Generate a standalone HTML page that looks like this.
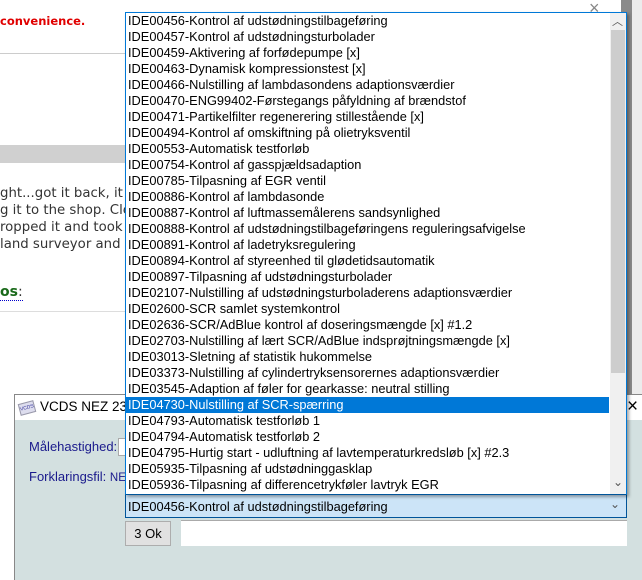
<!DOCTYPE html>
<html><head><meta charset="utf-8"><style>
body{margin:0;width:642px;height:579px;position:relative;overflow:hidden;background:#fff;font-family:"Liberation Sans",sans-serif}
.a{position:absolute}
.web{font-family:"DejaVu Sans",sans-serif;font-size:12.5px;color:#333}
.list{left:125px;top:12px;width:500px;height:481px;border:1px solid #0078d7;border-bottom-color:#005499;background:#fff;box-shadow:2px 2px 3px rgba(0,0,0,.35)}
.it{height:16px;line-height:16px;font-size:12.8px;color:#000;padding-left:2px;white-space:nowrap;width:481px}
.sel{background:#0078d7;color:#fff}
</style></head><body>
<div class="a" style="left:621px;top:0;width:11px;height:395px;background:#8a8a8a"></div>
<div class="a" style="left:632px;top:0;width:10px;height:395px;background:#ececec"></div>
<div class="a web" style="left:0;top:14px;color:#e00000;font-weight:bold;font-size:11.5px">convenience.</div>
<div class="a" style="left:0;top:53px;width:600px;height:1px;background:#ccc"></div>
<div class="a" style="left:589px;top:-2px;font-size:18px;color:#888">×</div>
<div class="a" style="left:0;top:145px;width:600px;height:18px;background:#d0d0d0"></div>
<div class="a web" style="left:0;top:185px;line-height:17px;font-size:13.3px">ght...got it back, it t<br>g it to the shop. Cle<br>ropped it and took r<br>land surveyor and v</div>
<div class="a web" style="left:0;top:284px;color:#1a6a1a;font-weight:bold;font-size:14px;border-bottom:1px dotted #00c">os<span style="color:#333;font-weight:normal">:</span></div>
<div class="a" style="left:0;top:311px;width:600px;height:1px;background:#ddd"></div>

<div class="a" style="left:14px;top:394px;width:628px;height:185px;background:#d3e0e0;border-left:1px solid #888;border-top:1px solid #888"></div>
<div class="a" style="left:15px;top:395px;width:627px;height:25px;background:#fff"></div>
<div class="a" style="left:19px;top:402px;width:14px;height:10px;background:#dde;border:1px solid #99a;transform:rotate(-15deg);font-size:5px;line-height:10px;color:#339;text-align:center">VCDS</div>
<div class="a" style="left:40px;top:399px;font-size:13.5px">VCDS NEZ 23.3.1</div>
<div class="a" style="left:627px;top:396px;font-size:19px;color:#000">×</div>
<div class="a" style="left:29px;top:439px;font-size:13px;color:#1a1a8c">Målehastighed:</div>
<div class="a" style="left:118px;top:438px;width:10px;height:16px;border:1px solid #aaa;background:#fff"></div>
<div class="a" style="left:29px;top:469px;font-size:13px;color:#1a1a8c">Forklaringsfil: <span style="font-size:11.5px">NE</span></div>

<div class="a" style="left:125px;top:494px;width:500px;height:22px;background:#cce4f7;border:1px solid #005499"></div>
<div class="a" style="left:128px;top:499px;font-size:12.8px">IDE00456-Kontrol af udstødningstilbageføring</div>
<div class="a" style="left:610px;top:497px;font-size:12px;color:#555">⌄</div>
<div class="a" style="left:125px;top:521px;width:44px;height:23px;background:#e1e1e1;border:1px solid #adadad;font-size:13px;line-height:23px;text-align:center">3 Ok</div>
<div class="a" style="left:181px;top:520px;width:446px;height:25px;background:#fff;border-top:1px solid #aaa"></div>

<div class="a list">
<div class="a" style="left:484px;top:0;width:16px;height:481px;background:#f0f0f0"></div>
<div class="a" style="left:485px;top:17px;width:14px;height:343px;background:#cdcdcd"></div>
<div class="a" style="left:486px;top:0;font-size:11px;color:#555">︿</div>
<div class="a" style="left:487px;top:462px;font-size:12px;color:#555">⌄</div>
<div class="a" style="top:0;left:0">
<div class="it">IDE00456-Kontrol af udstødningstilbageføring</div>
<div class="it">IDE00457-Kontrol af udstødningsturbolader</div>
<div class="it">IDE00459-Aktivering af forfødepumpe [x]</div>
<div class="it">IDE00463-Dynamisk kompressionstest [x]</div>
<div class="it">IDE00466-Nulstilling af lambdasondens adaptionsværdier</div>
<div class="it">IDE00470-ENG99402-Førstegangs påfyldning af brændstof</div>
<div class="it">IDE00471-Partikelfilter regenerering stillestående [x]</div>
<div class="it">IDE00494-Kontrol af omskiftning på olietryksventil</div>
<div class="it">IDE00553-Automatisk testforløb</div>
<div class="it">IDE00754-Kontrol af gasspjældsadaption</div>
<div class="it">IDE00785-Tilpasning af EGR ventil</div>
<div class="it">IDE00886-Kontrol af lambdasonde</div>
<div class="it">IDE00887-Kontrol af luftmassemålerens sandsynlighed</div>
<div class="it">IDE00888-Kontrol af udstødningstilbageføringens reguleringsafvigelse</div>
<div class="it">IDE00891-Kontrol af ladetryksregulering</div>
<div class="it">IDE00894-Kontrol af styreenhed til glødetidsautomatik</div>
<div class="it">IDE00897-Tilpasning af udstødningsturbolader</div>
<div class="it">IDE02107-Nulstilling af udstødningsturboladerens adaptionsværdier</div>
<div class="it">IDE02600-SCR samlet systemkontrol</div>
<div class="it">IDE02636-SCR/AdBlue kontrol af doseringsmængde [x] #1.2</div>
<div class="it">IDE02703-Nulstilling af lært SCR/AdBlue indsprøjtningsmængde [x]</div>
<div class="it">IDE03013-Sletning af statistik hukommelse</div>
<div class="it">IDE03373-Nulstilling af cylindertryksensorernes adaptionsværdier</div>
<div class="it">IDE03545-Adaption af føler for gearkasse: neutral stilling</div>
<div class="it sel">IDE04730-Nulstilling af SCR-spærring</div>
<div class="it">IDE04793-Automatisk testforløb 1</div>
<div class="it">IDE04794-Automatisk testforløb 2</div>
<div class="it">IDE04795-Hurtig start - udluftning af lavtemperaturkredsløb [x] #2.3</div>
<div class="it">IDE05935-Tilpasning af udstødninggasklap</div>
<div class="it">IDE05936-Tilpasning af differencetrykføler lavtryk EGR</div>
</div>
</div>
</body></html>
